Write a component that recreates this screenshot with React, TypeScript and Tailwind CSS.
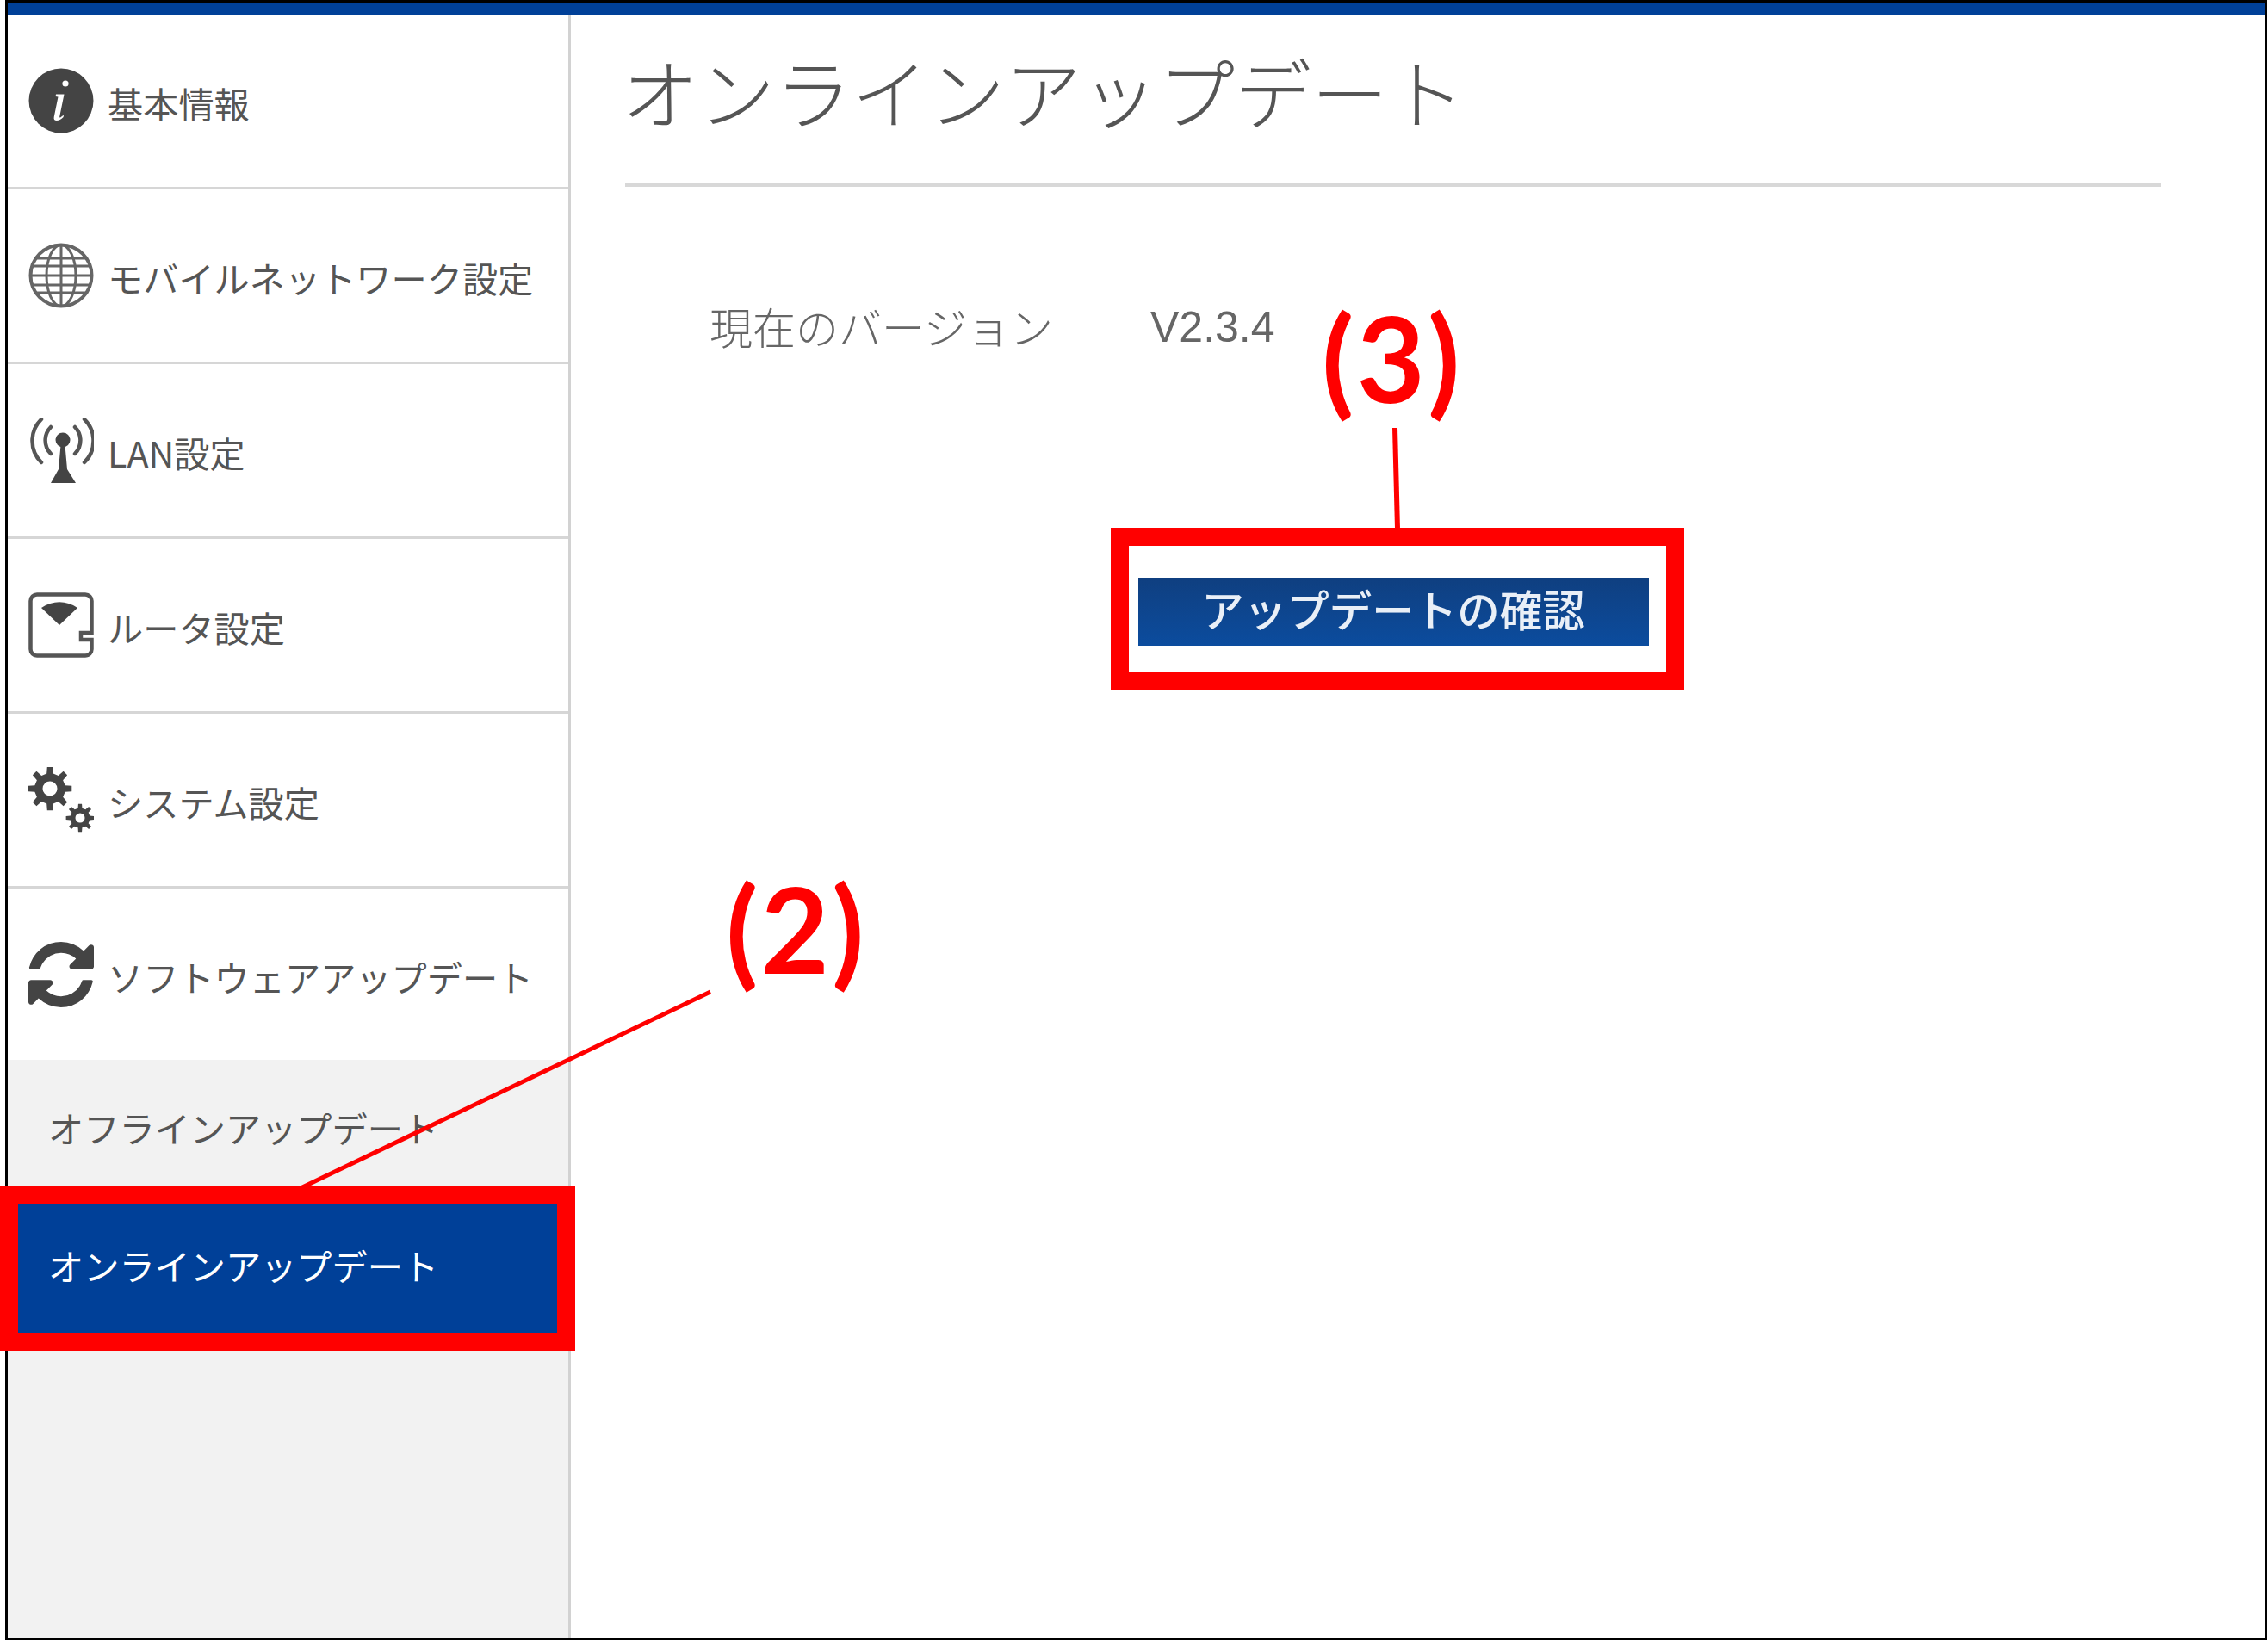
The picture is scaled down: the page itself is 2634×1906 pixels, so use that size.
// gear outline with a round hole, teeth pointing outward
function gearPath(cx: number, cy: number, outer: number, inner: number, hole: number, teeth = 8) {
  const pts: string[] = [];
  const step = (Math.PI * 2) / teeth;
  for (let i = 0; i < teeth; i++) {
    const a = i * step - Math.PI / 2;
    const w = step * 0.2;
    const corners = [
      [inner, a - w * 1.35],
      [outer, a - w * 0.8],
      [outer, a + w * 0.8],
      [inner, a + w * 1.35],
    ];
    corners.forEach(([r, t]) => {
      pts.push(`${(cx + r * Math.cos(t)).toFixed(2)} ${(cy + r * Math.sin(t)).toFixed(2)}`);
    });
  }
  const ring = `M${cx - hole} ${cy}a${hole} ${hole} 0 1 0 ${hole * 2} 0a${hole} ${hole} 0 1 0 ${-hole * 2} 0Z`;
  return `M${pts.join("L")}Z${ring}`;
}

function InfoIcon() {
  return (
    <svg viewBox="0 0 76 76" className="w-[76px] h-[76px]">
      <circle cx="38" cy="38" r="37.5" fill="#444444" />
      <circle cx="43" cy="18" r="3.6" fill="#ffffff" />
      <path
        d="M32 30.5h9.5l-5.3 26c-.2 1 .5 1.3 1.2.8l3.6-2.8-.4 2.4c-2.6 2.6-5.2 4-7.8 4-2.6 0-3.6-1.6-3.1-4l4.8-23.4-3-.6z"
        fill="#ffffff"
      />
    </svg>
  );
}

function GlobeIcon() {
  return (
    <svg viewBox="0 0 76 76" fill="none" stroke="#666666" strokeWidth="3" className="w-[76px] h-[76px]">
      <circle cx="38" cy="38" r="35.5" strokeWidth="4" />
      <ellipse cx="38" cy="38" rx="17" ry="35.5" />
      <path d="M38 3v70M3 38h70M9 18h58M9 58h58M5 27h66M5 49h66" />
    </svg>
  );
}

function AntennaIcon() {
  return (
    <svg viewBox="0 0 76 76" fill="none" stroke="#555555" strokeWidth="4.5" className="w-[76px] h-[76px]">
      <path d="M15 2a35 35 0 0 0 0 50M65 2a35 35 0 0 1 0 50" strokeLinecap="round" />
      <path d="M26 11a22 22 0 0 0 0 31M54 11a22 22 0 0 1 0 31" strokeLinecap="round" />
      <circle cx="40" cy="26" r="8.5" fill="#444444" stroke="none" />
      <path d="M37.5 32h5l2.5 28 10 16H26l9-16z" fill="#444444" stroke="none" />
    </svg>
  );
}

function RouterIcon() {
  return (
    <svg viewBox="0 0 76 76" className="w-[76px] h-[76px]">
      <path
        d="M10 2.5h56a7.5 7.5 0 0 1 7.5 7.5v37H61v8h12.5v11a7.5 7.5 0 0 1-7.5 7.5H10A7.5 7.5 0 0 1 2.5 66V10A7.5 7.5 0 0 1 10 2.5z"
        fill="#ffffff"
        stroke="#555555"
        strokeWidth="4.5"
      />
      <path d="M15 18c13-9 29-9 42 0L36 38z" fill="#444444" />
    </svg>
  );
}

function GearsIcon() {
  return (
    <svg viewBox="0 0 76 76" className="w-[76px] h-[76px]">
      <path d={gearPath(25, 25, 25.5, 18, 8.5)} fill="#444444" fillRule="evenodd" />
      <path d={gearPath(60, 59, 16.5, 11.5, 5.5)} fill="#444444" fillRule="evenodd" />
    </svg>
  );
}

function RefreshIcon() {
  return (
    <svg viewBox="0 0 1536 1536" className="w-[76px] h-[76px]" fill="#444444">
      <path d="M1511 928q0 5-1 7-64 268-268 434.5t-478 166.5q-146 0-282.5-55t-243.5-157l-129 129q-19 19-45 19t-45-19-19-45v-448q0-26 19-45t45-19h448q26 0 45 19t19 45-19 45l-137 137q71 66 161 102t187 36q134 0 250-65t186-179q11-17 53-117 8-23 30-23h192q13 0 22.5 9.5t9.5 22.5zm25-800v448q0 26-19 45t-45 19h-448q-26 0-45-19t-19-45 19-45l138-138q-148-137-349-137-134 0-250 65t-186 179q-11 17-53 117-8 23-30 23h-199q-13 0-22.5-9.5t-9.5-22.5v-7q65-268 270-434.5t480-166.5q146 0 284 55.5t245 156.5l130-129q19-19 45-19t45 19 19 45z" />
    </svg>
  );
}

const menu = [
  { label: "基本情報", icon: <InfoIcon /> },
  { label: "モバイルネットワーク設定", icon: <GlobeIcon /> },
  { label: "LAN設定", icon: <AntennaIcon /> },
  { label: "ルータ設定", icon: <RouterIcon /> },
  { label: "システム設定", icon: <GearsIcon /> },
];

export default function App() {
  return (
    <div className="relative h-[1906px] w-[2634px] bg-white font-['Noto_Sans_CJK_JP',sans-serif] text-[#555555] overflow-hidden">
      <div className="ml-[6px] mr-[1px] h-[1905px] border-[3px] border-black flex flex-col">
        {/* Top bar */}
        <div className="h-[14px] shrink-0 bg-[#004098]" />

        <div className="flex flex-1 min-h-0">
          {/* Sidebar */}
          <aside className="w-[654px] shrink-0 border-r-[3px] border-[#d2d2d2] flex flex-col bg-[#f2f2f2]">
            {menu.map((item) => (
              <div
                key={item.label}
                className="h-[203px] shrink-0 bg-white border-b-[3px] border-[#d6d6d6] flex items-center pl-[24px] gap-[16px]"
              >
                {item.icon}
                <span className="text-[41.2px] leading-none mt-[6px]">{item.label}</span>
              </div>
            ))}
            <div className="h-[199px] shrink-0 bg-white flex items-center pl-[24px] gap-[16px]">
              <RefreshIcon />
              <span className="text-[41.2px] leading-none mt-[6px]">ソフトウェアアップデート</span>
            </div>
            <div className="h-[160px] shrink-0 flex items-center pl-[47px] pb-[3px] text-[41.2px] leading-none">
              オフラインアップデート
            </div>
            <div className="h-[160px] shrink-0 flex items-center pl-[47px] pb-[3px] bg-[#004098] text-white text-[41.2px] leading-none">
              オンラインアップデート
            </div>
          </aside>

          {/* Main */}
          <main className="flex-1 pl-[63px] pr-[120px]">
            <div className="h-[200px] border-b-[4px] border-[#d8d8d8] pt-[32px]">
              <h1 className="text-[89px] leading-[112px] font-light -ml-[4px] text-[#555555]">オンラインアップデート</h1>
            </div>
            <div className="flex items-center pl-[98px] mt-[131px] h-[64px] text-[50px] leading-none text-[#666666]">
              <span className="w-[512px] font-light mb-[5px]">現在のバージョン</span>
              <span className="font-['Liberation_Sans',sans-serif]">V2.3.4</span>
            </div>
            <div className="flex justify-center mt-[259px]">
              <button className="w-[593px] h-[79px] pb-[8px] bg-gradient-to-b from-[#0f3f80] to-[#0b4c9e] text-[#e9eff7] text-[49.5px] leading-none font-medium">
                アップデートの確認
              </button>
            </div>
          </main>
        </div>
      </div>

      {/* Annotations */}
      <svg viewBox="0 0 2634 1906" className="absolute inset-0 w-[2634px] h-[1906px] pointer-events-none">
        <line x1="825" y1="1152" x2="349" y2="1380" stroke="#ff0000" strokeWidth="5" />
        <line x1="1620" y1="497" x2="1623" y2="614" stroke="#ff0000" strokeWidth="6" />
      </svg>
      <div className="absolute left-0 top-[1378px] w-[668px] h-[191px] border-[21px] border-[#ff0000]" />
      <div className="absolute left-[1290px] top-[613px] w-[666px] h-[189px] border-[21px] border-[#ff0000]" />
      <div className="absolute left-[843px] top-[1003px] text-[137px] leading-[150px] tracking-[3px] font-bold text-[#ff0000] font-['Lato',sans-serif]">
        (2)
      </div>
      <div className="absolute left-[1535px] top-[340px] text-[137px] leading-[150px] tracking-[3px] font-bold text-[#ff0000] font-['Lato',sans-serif]">
        (3)
      </div>
    </div>
  );
}
